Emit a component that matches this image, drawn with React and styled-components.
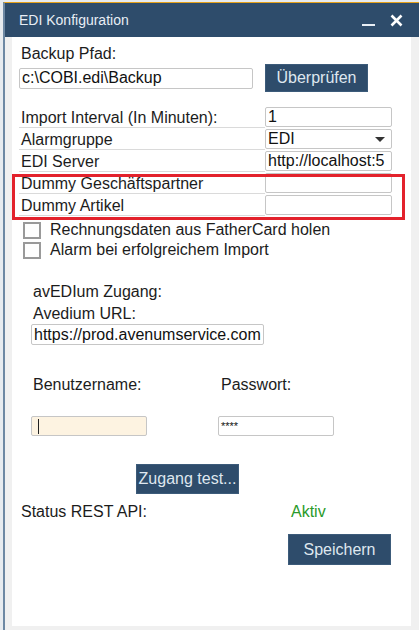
import React from 'react'
import styled, { createGlobalStyle } from 'styled-components'

const GlobalStyle = createGlobalStyle`
  html, body {
    margin: 0;
    padding: 0;
    background: #e4e8ec;
  }
  body {
    font-family: "Liberation Sans", Arial, sans-serif;
    color: #1c1c1c;
  }
`

const Desktop = styled.div`
  width: 419px;
  height: 630px;
  overflow: hidden;
  padding: 2px 0 0 3px;
  box-sizing: border-box;
  background: #e7ebef;
`

const Window = styled.div`
  height: 100%;
  display: flex;
  flex-direction: column;
  border-top: 1px solid #e4a11b;
  border-left: 2px solid #6d88a3;
  background: #f0f0f0;
`

const TitleBar = styled.div`
  height: 34px;
  flex: none;
  display: flex;
  align-items: center;
  background: #2e4c6b;
  color: #e8eef5;
  padding: 0 16px 0 14px;
  font-size: 14px;
`

const Title = styled.span`
  flex: 1;
`

const WinButton = styled.span`
  display: flex;
  align-items: center;
  justify-content: center;
  width: 14px;
  height: 16px;
  margin-left: ${p => p.gap || 0}px;
`

const Frame = styled.div`
  flex: 1;
  padding: 0 8px 5px 7px;
  display: flex;
`

const Panel = styled.div`
  flex: 1;
  background: #ffffff;
  padding: 7px 0 0 7px;
  font-size: 16px;
`

const Label = styled.div`
  height: 20px;
  line-height: 20px;
  padding-left: ${p => p.indent || 2}px;
  margin-top: ${p => p.top || 0}px;
`

const PathRow = styled.div`
  display: flex;
  align-items: center;
  gap: 12px;
`

const Field = styled.div`
  width: ${p => p.w}px;
  height: ${p => p.h || 20}px;
  box-sizing: border-box;
  border: 1px solid #c6c6c6;
  border-radius: 2px;
  background: ${p => (p.focused ? '#fdf3e1' : '#ffffff')};
  display: flex;
  align-items: center;
  padding-left: 2px;
  overflow: hidden;
  white-space: nowrap;
  font-size: ${p => p.fs || 16}px;
  color: #111;
`

const Caret = styled.span`
  width: 1px;
  height: 15px;
  margin-left: 4px;
  background: #222;
`

const Button = styled.div`
  width: 103px;
  height: ${p => p.h || 28}px;
  box-sizing: border-box;
  background: #2e4c6b;
  border: 1px solid #3c5b7a;
  color: #dfe7ef;
  font-size: 16px;
  display: flex;
  align-items: center;
  justify-content: center;
  margin-left: ${p => p.left || 0}px;
  margin-top: ${p => p.top || 0}px;
`

const Grid = styled.div`
  margin-top: 14px;
  width: 373px;
`

const Highlight = styled.div`
  position: relative;

  &::after {
    content: '';
    position: absolute;
    inset: 2px -13px -4px -7px;
    border: 3px solid #e3222c;
    pointer-events: none;
  }
`

const FormRow = styled.div`
  display: grid;
  grid-template-columns: 246px 127px;
  height: 22px;
`

const RowLabel = styled.div`
  border-bottom: 1px solid #dadada;
  padding: 2px 0 0 2px;
  line-height: 19px;
  height: 22px;
  box-sizing: border-box;
`

const RowInput = styled(Field)`
  align-self: center;
  justify-content: space-between;
  padding-right: 6px;
`

const Arrow = styled.span`
  flex: none;
  width: 0;
  height: 0;
  border-left: 5px solid transparent;
  border-right: 5px solid transparent;
  border-top: 5px solid #333;
`

const Check = styled.label`
  display: flex;
  align-items: center;
  height: 20px;
  padding-left: 4px;
  margin-top: ${p => p.top || 0}px;
`

const Box = styled.span`
  width: 18px;
  height: 17px;
  box-sizing: border-box;
  border: 2px solid #9a9a9a;
  background: #fff;
  margin-right: 9px;
`

const Section = styled.div`
  padding-left: 12px;
  margin-top: 22px;
`

const Pair = styled.div`
  display: flex;
  margin-top: ${p => p.top || 0}px;
`

const Col = styled.div`
  width: ${p => p.w}px;
`

const StatusRow = styled.div`
  display: flex;
  margin-top: 8px;
  height: 20px;
  line-height: 20px;
  padding-left: 2px;
`

const StatusLabel = styled.span`
  width: 270px;
`

const Aktiv = styled.span`
  color: #2a9a2a;
`

const Footer = styled.div`
  display: flex;
  justify-content: flex-end;
  padding-right: 20px;
  margin-top: 12px;
`

export default function App() {
  return (
    <>
      <GlobalStyle />
      <Desktop>
        <Window>
          <TitleBar>
            <Title>EDI Konfiguration</Title>
            <WinButton>
              <svg width="14" height="16" viewBox="0 0 14 16">
                <rect x="0" y="12" width="13" height="2" fill="#e8eef5" />
              </svg>
            </WinButton>
            <WinButton gap={13}>
              <svg width="13" height="13" viewBox="0 0 13 13">
                <path d="M1.5 1.5 L11.5 11.5 M11.5 1.5 L1.5 11.5" stroke="#ffffff" strokeWidth="2.6" />
              </svg>
            </WinButton>
          </TitleBar>
          <Frame>
            <Panel>
              <Label>Backup Pfad:</Label>
              <PathRow>
                <Field w={234} h={21}>c:\COBI.edi\Backup</Field>
                <Button>Überprüfen</Button>
              </PathRow>

              <Grid>
                <FormRow>
                  <RowLabel>Import Interval (In Minuten):</RowLabel>
                  <RowInput w={127}>1</RowInput>
                </FormRow>
                <FormRow>
                  <RowLabel>Alarmgruppe</RowLabel>
                  <RowInput w={127}>
                    EDI
                    <Arrow />
                  </RowInput>
                </FormRow>
                <FormRow>
                  <RowLabel>EDI Server</RowLabel>
                  <RowInput w={127}>http://localhost:5</RowInput>
                </FormRow>
                <Highlight>
                  <FormRow>
                    <RowLabel>Dummy Geschäftspartner</RowLabel>
                    <RowInput w={127} />
                  </FormRow>
                  <FormRow>
                    <RowLabel>Dummy Artikel</RowLabel>
                    <RowInput w={127} />
                  </FormRow>
                </Highlight>
              </Grid>

              <Check top={4}>
                <Box />
                Rechnungsdaten aus FatherCard holen
              </Check>
              <Check>
                <Box />
                Alarm bei erfolgreichem Import
              </Check>

              <Section>
                <Label>avEDIum Zugang:</Label>
                <Label top={2}>Avedium URL:</Label>
                <Field w={233} h={21} fs={16}>https://prod.avenumservice.com</Field>
                <Pair top={30}>
                  <Col w={187}>
                    <Label>Benutzername:</Label>
                  </Col>
                  <Col w={150}>
                    <Label indent={3}>Passwort:</Label>
                  </Col>
                </Pair>
                <Pair top={21}>
                  <Col w={187}>
                    <Field w={116} focused>
                      <Caret />
                    </Field>
                  </Col>
                  <Col w={150}>
                    <Field w={116} fs={11}>****</Field>
                  </Col>
                </Pair>
                <Button h={30} left={105} top={28}>Zugang test...</Button>
              </Section>

              <StatusRow>
                <StatusLabel>Status REST API:</StatusLabel>
                <Aktiv>Aktiv</Aktiv>
              </StatusRow>
              <Footer>
                <Button h={31}>Speichern</Button>
              </Footer>
            </Panel>
          </Frame>
        </Window>
      </Desktop>
    </>
  )
}
